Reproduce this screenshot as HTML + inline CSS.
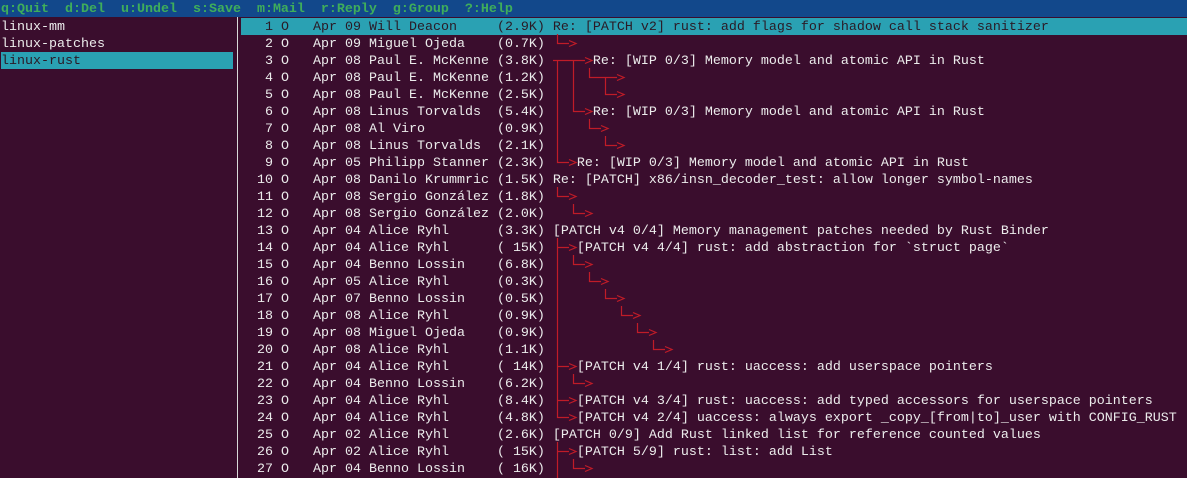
<!DOCTYPE html>
<html><head><meta charset="utf-8"><style>
html,body{margin:0;padding:0;background:#3a0d2d;width:1187px;height:478px;overflow:hidden}
pre{margin:0;font-family:"Liberation Mono","DejaVu Sans Mono",monospace;font-size:13.33px;line-height:17px;color:#ececec;position:absolute}
#bar{position:absolute;left:0;top:0;width:1187px;height:17px;background:#12488b}
#bar pre{left:1px;top:1px;color:#3fae5b;font-weight:bold}
#sel{position:absolute;left:241px;top:18px;width:946px;height:17px;background:#2aa1b3}
#lsel{position:absolute;left:1px;top:52px;width:232px;height:17px;background:#2aa1b3}
#div{position:absolute;left:237px;top:17px;width:1px;height:461px;background:#d8d8d8}
.d{color:#2a1a26}
svg{position:absolute;left:0;top:0}
</style></head><body>
<div id="bar"><pre>q:Quit  d:Del  u:Undel  s:Save  m:Mail  r:Reply  g:Group  ?:Help</pre></div>
<div id="sel"></div><div id="lsel"></div><div id="div"></div>
<pre style="left:1px;top:19px">linux-mm
linux-patches
<span class="d">linux-rust</span></pre>
<pre style="left:241px;top:19px"><span class="d">   1 O   Apr 09 Will Deacon     (2.9K) Re: [PATCH v2] rust: add flags for shadow call stack sanitizer</span>
   2 O   Apr 09 Miguel Ojeda    (0.7K)
   3 O   Apr 08 Paul E. McKenne (3.8K)      Re: [WIP 0/3] Memory model and atomic API in Rust
   4 O   Apr 08 Paul E. McKenne (1.2K)
   5 O   Apr 08 Paul E. McKenne (2.5K)
   6 O   Apr 08 Linus Torvalds  (5.4K)      Re: [WIP 0/3] Memory model and atomic API in Rust
   7 O   Apr 08 Al Viro         (0.9K)
   8 O   Apr 08 Linus Torvalds  (2.1K)
   9 O   Apr 05 Philipp Stanner (2.3K)    Re: [WIP 0/3] Memory model and atomic API in Rust
  10 O   Apr 08 Danilo Krummric (1.5K) Re: [PATCH] x86/insn_decoder_test: allow longer symbol-names
  11 O   Apr 08 Sergio González (1.8K)
  12 O   Apr 08 Sergio González (2.0K)
  13 O   Apr 04 Alice Ryhl      (3.3K) [PATCH v4 0/4] Memory management patches needed by Rust Binder
  14 O   Apr 04 Alice Ryhl      ( 15K)    [PATCH v4 4/4] rust: add abstraction for `struct page`
  15 O   Apr 04 Benno Lossin    (6.8K)
  16 O   Apr 05 Alice Ryhl      (0.3K)
  17 O   Apr 07 Benno Lossin    (0.5K)
  18 O   Apr 08 Alice Ryhl      (0.9K)
  19 O   Apr 08 Miguel Ojeda    (0.9K)
  20 O   Apr 08 Alice Ryhl      (1.1K)
  21 O   Apr 04 Alice Ryhl      ( 14K)    [PATCH v4 1/4] rust: uaccess: add userspace pointers
  22 O   Apr 04 Benno Lossin    (6.2K)
  23 O   Apr 04 Alice Ryhl      (8.4K)    [PATCH v4 3/4] rust: uaccess: add typed accessors for userspace pointers
  24 O   Apr 04 Alice Ryhl      (4.8K)    [PATCH v4 2/4] uaccess: always export _copy_[from|to]_user with CONFIG_RUST
  25 O   Apr 02 Alice Ryhl      (2.6K) [PATCH 0/9] Add Rust linked list for reference counted values
  26 O   Apr 02 Alice Ryhl      ( 15K)    [PATCH 5/9] rust: list: add List
  27 O   Apr 04 Benno Lossin    ( 16K)</pre>
<svg width="1187" height="478" fill="none" stroke="#c01c28" stroke-width="1.2">
<!-- row 2 -->
<path d="M557.5 34V43.5H569M569 40.5L576 43.5L569 46.5"/>
<!-- row 3-9 -->
<path d="M553 60.5H585M585 57.5L592 60.5L585 63.5"/>
<path d="M557.5 60.5V162.5H569M569 159.5L576 162.5L569 165.5"/>
<path d="M573.5 60.5V111.5H585M585 108.5L592 111.5L585 114.5"/>
<path d="M589.5 68V77.5H617M617 74.5L624 77.5L617 80.5"/>
<path d="M605.5 77.5V94.5H617M617 91.5L624 94.5L617 97.5"/>
<path d="M589.5 119V128.5H601M601 125.5L608 128.5L601 131.5"/>
<path d="M605.5 136V145.5H617M617 142.5L624 145.5L617 148.5"/>
<!-- 11-12 -->
<path d="M557.5 187V196.5H569M569 193.5L576 196.5L569 199.5"/>
<path d="M573.5 204V213.5H585M585 210.5L592 213.5L585 216.5"/>
<!-- 14-24 -->
<path d="M557.5 238V417.5H569M569 414.5L576 417.5L569 420.5"/>
<path d="M557.5 247.5H569M569 244.5L576 247.5L569 250.5"/>
<path d="M557.5 366.5H569M569 363.5L576 366.5L569 369.5"/>
<path d="M557.5 400.5H569M569 397.5L576 400.5L569 403.5"/>
<path d="M573.5 255V264.5H585M585 261.5L592 264.5L585 267.5"/>
<path d="M589.5 272V281.5H601M601 278.5L608 281.5L601 284.5"/>
<path d="M605.5 289V298.5H617M617 295.5L624 298.5L617 301.5"/>
<path d="M621.5 306V315.5H633M633 312.5L640 315.5L633 318.5"/>
<path d="M637.5 323V332.5H649M649 329.5L656 332.5L649 335.5"/>
<path d="M653.5 340V349.5H665M665 346.5L672 349.5L665 352.5"/>
<path d="M573.5 374V383.5H585M585 380.5L592 383.5L585 386.5"/>
<!-- 26-27 -->
<path d="M557.5 442V478M557.5 451.5H569M569 448.5L576 451.5L569 454.5"/>
<path d="M573.5 459V468.5H585M585 465.5L592 468.5L585 471.5"/>
</svg>
</body></html>
